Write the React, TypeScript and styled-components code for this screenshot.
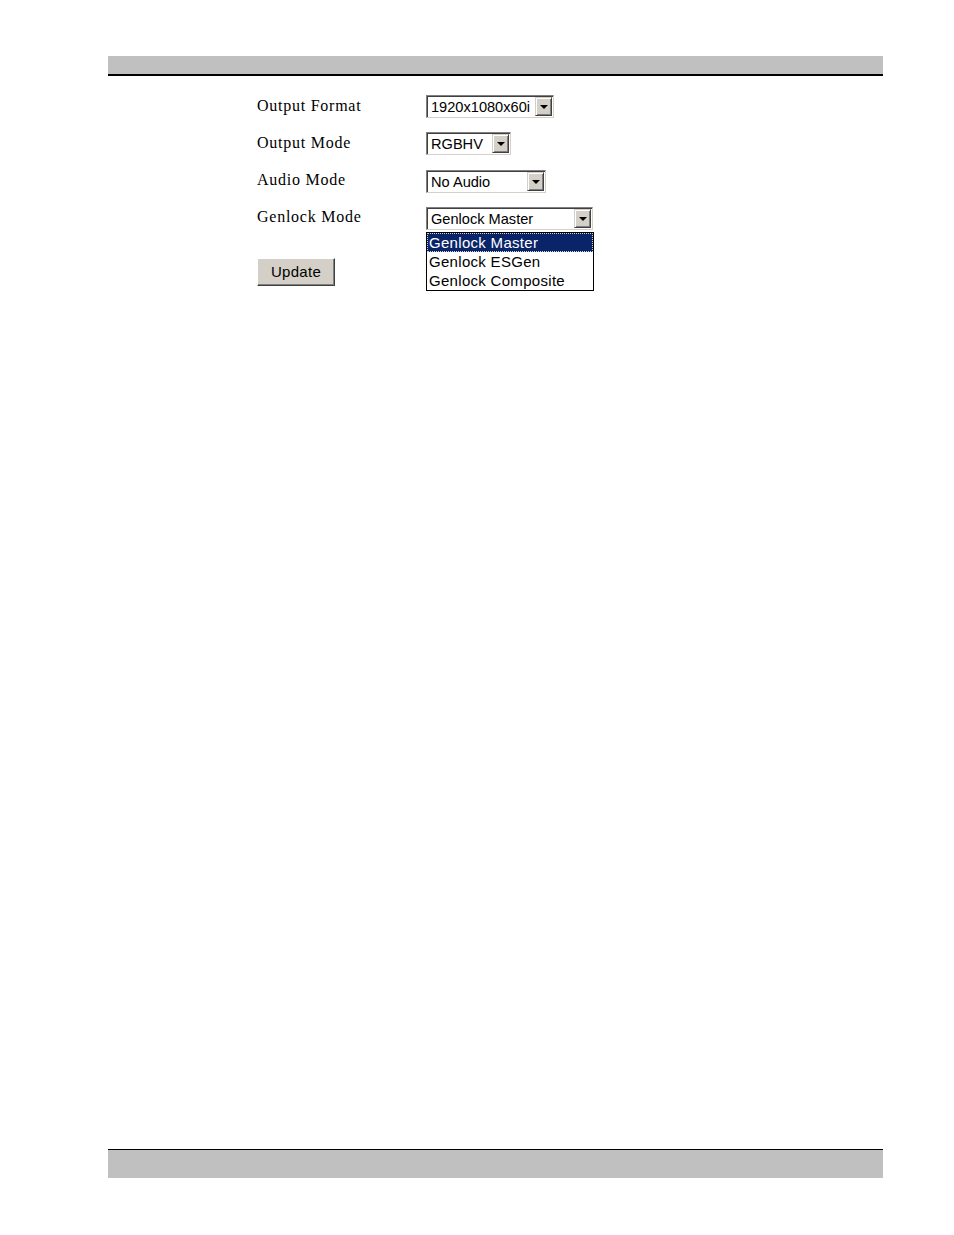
import React from 'react';
import styled, { createGlobalStyle } from 'styled-components';

const GlobalStyle = createGlobalStyle`
  html, body {
    margin: 0;
    padding: 0;
    background: #fff;
  }
`;

const Page = styled.div`
  display: flex;
  flex-direction: column;
  min-height: 1235px;
  padding: 56px 71px 0 108px;
  box-sizing: border-box;
`;

const HeaderBar = styled.div`
  height: 18px;
  background: #c0c0c0;
  border-bottom: 2px solid #000;
`;

const FooterBar = styled.div`
  height: 28px;
  background: #c0c0c0;
  border-top: 1px solid #000;
  margin-bottom: 57px;
`;

const Content = styled.div`
  flex: 1;
  padding: 19px 0 0 149px;
`;

const Form = styled.div`
  display: grid;
  grid-template-columns: 169px auto;
  grid-auto-rows: 23px;
  row-gap: 14.33px;
  align-items: center;
`;

const Label = styled.div`
  font-family: 'Liberation Serif', 'Times New Roman', serif;
  font-size: 16px;
  letter-spacing: 0.75px;
  color: #000;
  line-height: 23px;
  margin-top: -3px;
`;

const SelectBox = styled.div<{ $width: number }>`
  position: relative;
  width: ${p => p.$width}px;
  height: 23px;
  box-sizing: border-box;
  background: #fff;
  border-style: solid;
  border-width: 1px;
  border-color: #808080 #d4d0c8 #d4d0c8 #808080;
  box-shadow: inset 1px 1px 0 #404040, inset -1px -1px 0 #fff;
  display: flex;
  align-items: center;
  justify-self: start;
`;

const SelectValue = styled.span`
  flex: 1;
  padding-left: 4px;
  padding-top: 1px;
  font-family: 'Liberation Sans', Arial, sans-serif;
  font-size: 14.6px;
  color: #000;
  white-space: nowrap;
  overflow: hidden;
`;

const ArrowButton = styled.div`
  width: 17px;
  height: 19px;
  margin-right: 1px;
  box-sizing: border-box;
  background: #d4d0c8;
  border-style: solid;
  border-width: 1px;
  border-color: #d4d0c8 #404040 #404040 #d4d0c8;
  box-shadow: inset 1px 1px 0 #fff, inset -1px -1px 0 #808080;
  display: flex;
  align-items: center;
  justify-content: center;
`;

const Triangle = styled.span`
  width: 0;
  height: 0;
  border-left: 4px solid transparent;
  border-right: 4px solid transparent;
  border-top: 4px solid #000;
  margin-top: 1px;
`;

const DropList = styled.div`
  position: absolute;
  left: -1px;
  top: 24px;
  width: 168px;
  box-sizing: border-box;
  border: 1px solid #000;
  background: #fff;
  z-index: 2;
`;

const Option = styled.div<{ $selected?: boolean }>`
  height: 19px;
  line-height: 19px;
  padding-left: 2px;
  box-sizing: border-box;
  font-family: 'Liberation Sans', Arial, sans-serif;
  font-size: 15px;
  letter-spacing: 0.3px;
  white-space: nowrap;
  color: ${p => (p.$selected ? '#fff' : '#000')};
  background: ${p => (p.$selected ? '#0a246a' : '#fff')};
  outline: ${p => (p.$selected ? '1px dotted #d4d0c8' : 'none')};
  outline-offset: -1px;
`;

const UpdateButton = styled.button`
  margin-top: 28px;
  width: 78px;
  height: 28px;
  padding: 0;
  background: #d4d0c8;
  border-style: solid;
  border-width: 1px;
  border-color: #fff #404040 #404040 #fff;
  box-shadow: inset -1px -1px 0 #808080;
  font-family: 'Liberation Sans', Arial, sans-serif;
  font-size: 15px;
  letter-spacing: 0.3px;
  color: #000;
  cursor: pointer;
`;

type SelectProps = {
  value: string;
  width: number;
  options?: string[];
};

const Select = ({ value, width, options }: SelectProps) => (
  <SelectBox $width={width}>
    <SelectValue>{value}</SelectValue>
    <ArrowButton>
      <Triangle />
    </ArrowButton>
    {options && (
      <DropList>
        {options.map(o => (
          <Option key={o} $selected={o === value}>
            {o}
          </Option>
        ))}
      </DropList>
    )}
  </SelectBox>
);

const App = () => (
  <>
    <GlobalStyle />
    <Page>
      <HeaderBar />
      <Content>
        <Form>
          <Label>Output Format</Label>
          <Select value="1920x1080x60i" width={128} />
          <Label>Output Mode</Label>
          <Select value="RGBHV" width={85} />
          <Label>Audio Mode</Label>
          <Select value="No Audio" width={120} />
          <Label>Genlock Mode</Label>
          <Select
            value="Genlock Master"
            width={167}
            options={['Genlock Master', 'Genlock ESGen', 'Genlock Composite']}
          />
        </Form>
        <UpdateButton>Update</UpdateButton>
      </Content>
      <FooterBar />
    </Page>
  </>
);

export default App;
